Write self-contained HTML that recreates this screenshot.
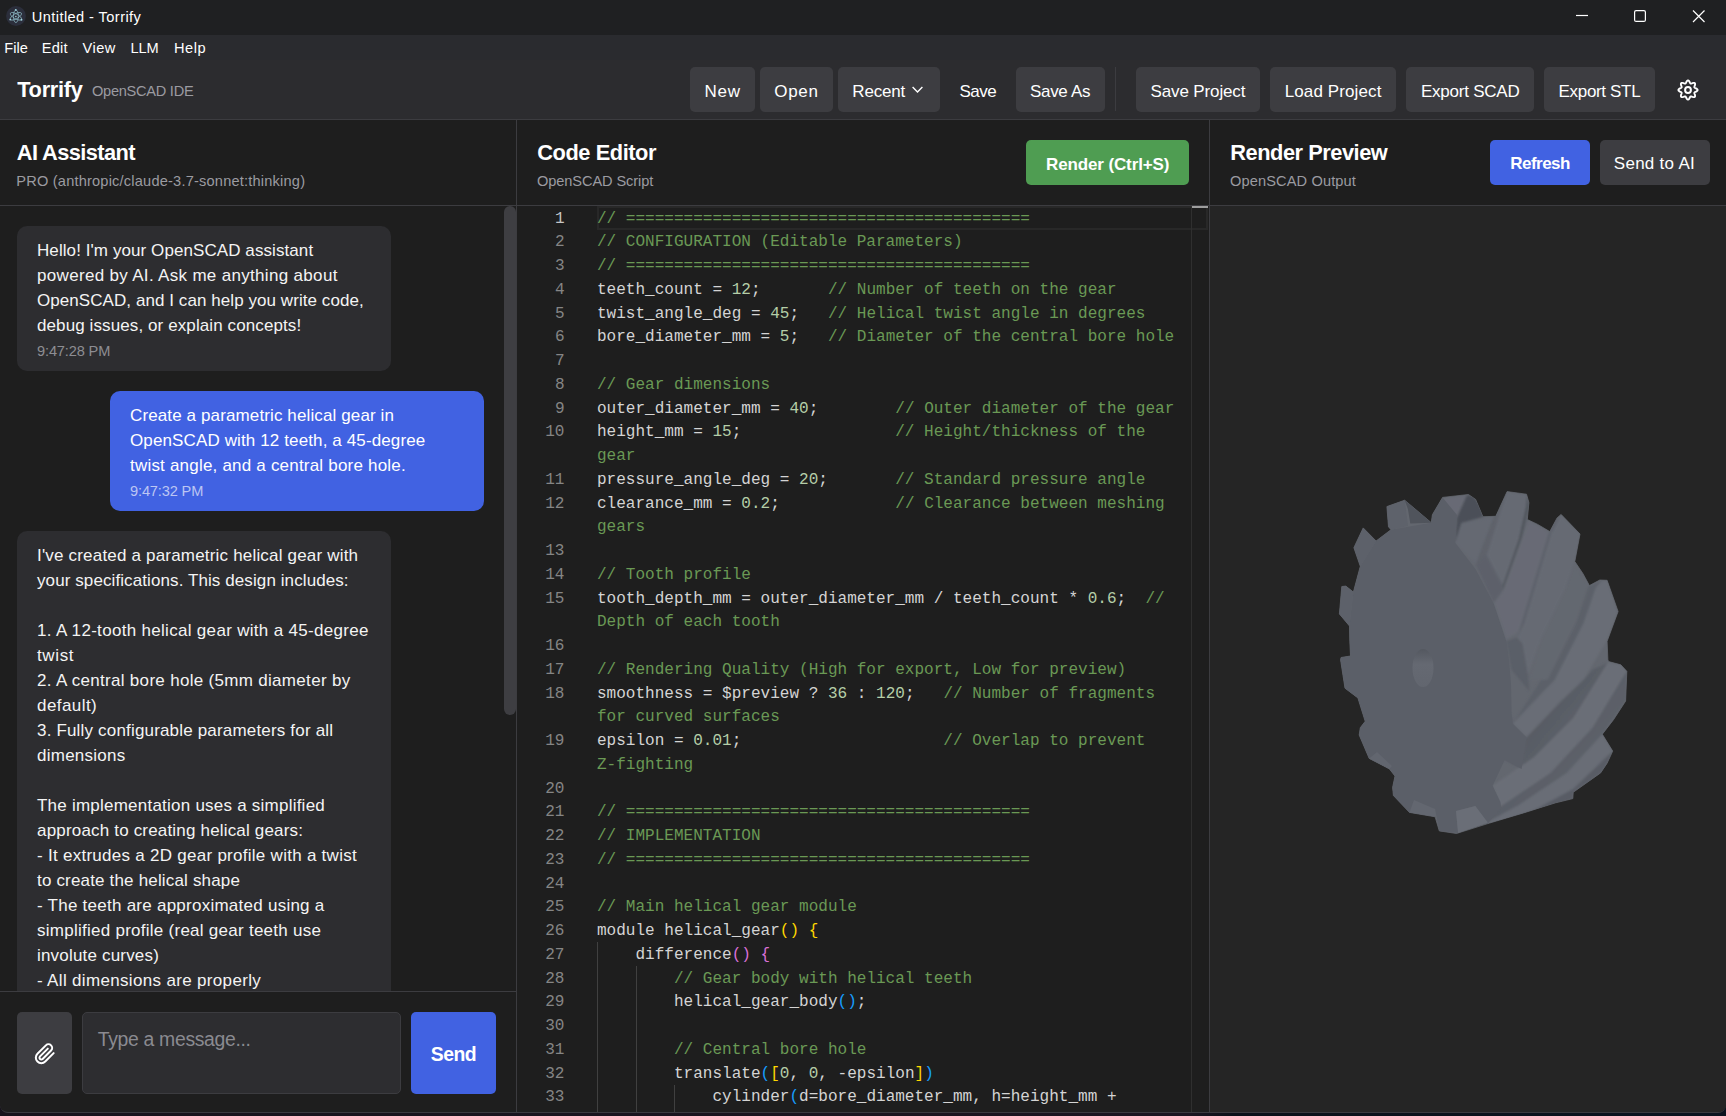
<!DOCTYPE html>
<html lang="en"><head><meta charset="utf-8"><title>Untitled - Torrify</title>
<style>
*{box-sizing:border-box;margin:0;padding:0}
html,body{width:1726px;height:1116px;overflow:hidden;background:linear-gradient(90deg,#17131c 0%,#1a1520 69%,#0a1019 71.5%,#0b1420 100%);}
body{font-family:"Liberation Sans",sans-serif;color:#fff;position:relative}
.win{position:absolute;left:0;top:0;width:1726px;height:1113px;background:#1e1e1e;border-radius:0 0 8px 8px;overflow:hidden;border-bottom:1px solid #3a3a40}
.abs{position:absolute}
.t{position:absolute;white-space:nowrap;line-height:1}
.titlebar{position:absolute;left:0;top:0;width:1726px;height:34.6px;background:#1f2022}
.menubar{position:absolute;left:0;top:34px;width:1726px;height:26px;background:#2a2b2f}
.toolbar{position:absolute;left:0;top:60px;width:1726px;height:60px;background:#2c2c2f;border-bottom:1px solid #3c3c40}
.btn{position:absolute;border-radius:5px;background:#3d3d41}
.vline{position:absolute;width:1px;background:#3c3c40}
.hline{position:absolute;height:1px;background:#3c3c40}
.bubble{position:absolute;border-radius:10px;background:#2d2d30}
.bubble.user{background:#4162e2}
.code{position:absolute;left:597px;white-space:pre;font-family:"Liberation Mono",monospace;font-size:16.04px;line-height:23.75px;height:23.75px;color:#d4d4d4}
.ln{position:absolute;left:517px;width:47.5px;text-align:right;white-space:pre;font-family:"Liberation Mono",monospace;font-size:16.04px;line-height:23.75px;height:23.75px;color:#858585}
.c{color:#6a9955}.n{color:#b5cea8}
.b1{color:#ffd700}.b2{color:#da70d6}.b3{color:#179fff}
.guide{position:absolute;width:1px;background:#404040}
</style></head>
<body>
<div class="win">
<div class="menubar"></div>
<div class="titlebar"></div>
<svg class="abs" style="left:6px;top:6px" width="20" height="20" viewBox="0 0 20 20"><circle cx="10" cy="10" r="9.9" fill="#2b2e3b"/><g fill="none" stroke="#8fbcc7" stroke-width="0.7"><ellipse cx="9.9" cy="10.3" rx="6.3" ry="2.5" transform="rotate(30 9.9 10.3)"/><ellipse cx="9.9" cy="10.3" rx="6.3" ry="2.5" transform="rotate(90 9.9 10.3)"/><ellipse cx="9.9" cy="10.3" rx="6.3" ry="2.5" transform="rotate(150 9.9 10.3)"/></g><g fill="#a3d4df"><circle cx="9.9" cy="10.4" r="0.75"/><circle cx="9.8" cy="3.9" r="0.95"/><circle cx="4.3" cy="13.6" r="0.95"/><circle cx="15.5" cy="13.7" r="0.95"/></g></svg>
<div class="t" id="t1" style="left:31.80px;top:10.24px;font-size:14.6px;color:#fff;letter-spacing:0.421px;">Untitled - Torrify</div>
<svg class="abs" style="left:1560px;top:0" width="166" height="35" viewBox="0 0 166 35"><g stroke="#fff" stroke-width="1.2" fill="none"><path d="M16 15.5h12"/><rect x="74.6" y="10.6" width="10.8" height="10.8" rx="1.5"/><path d="M133 10.5l11.5 11.5M144.5 10.5L133 22"/></g></svg>
<div class="t" id="t2" style="left:4.30px;top:41.14px;font-size:14.6px;color:#fff;letter-spacing:-0.004px;">File</div>
<div class="t" id="t3" style="left:41.80px;top:41.14px;font-size:14.6px;color:#fff;letter-spacing:0.186px;">Edit</div>
<div class="t" id="t4" style="left:82.60px;top:41.14px;font-size:14.6px;color:#fff;letter-spacing:0.481px;">View</div>
<div class="t" id="t5" style="left:130.60px;top:41.14px;font-size:14.6px;color:#fff;letter-spacing:-0.130px;">LLM</div>
<div class="t" id="t6" style="left:173.90px;top:41.14px;font-size:14.6px;color:#fff;letter-spacing:0.546px;">Help</div>
<div class="toolbar"></div>
<div class="t" id="t7" style="left:17.20px;top:79.15px;font-size:21.8px;color:#fff;font-weight:bold;letter-spacing:-0.275px;">Torrify</div>
<div class="t" id="t8" style="left:92.00px;top:83.64px;font-size:14.6px;color:#9b9ba1;letter-spacing:-0.270px;">OpenSCAD IDE</div>
<div class="btn" style="left:690px;top:67px;width:65px;height:44.5px"></div>
<div class="t" id="t9" style="left:704.50px;top:82.61px;font-size:17px;color:#fff;letter-spacing:0.728px;">New</div>
<div class="btn" style="left:760px;top:67px;width:73px;height:44.5px"></div>
<div class="t" id="t10" style="left:774.30px;top:82.61px;font-size:17px;color:#fff;letter-spacing:0.652px;">Open</div>
<div class="btn" style="left:838px;top:67px;width:102px;height:44.5px"></div>
<div class="t" id="t11" style="left:852.30px;top:82.61px;font-size:17px;color:#fff;letter-spacing:-0.179px;">Recent</div>
<div class="t" id="t12" style="left:959.40px;top:82.61px;font-size:17px;color:#fff;letter-spacing:-0.438px;">Save</div>
<div class="btn" style="left:1016px;top:67px;width:89px;height:44.5px"></div>
<div class="t" id="t13" style="left:1030.00px;top:82.61px;font-size:17px;color:#fff;letter-spacing:-0.311px;">Save As</div>
<div class="btn" style="left:1136px;top:67px;width:124px;height:44.5px"></div>
<div class="t" id="t14" style="left:1150.60px;top:82.61px;font-size:17px;color:#fff;letter-spacing:-0.141px;">Save Project</div>
<div class="btn" style="left:1270px;top:67px;width:126px;height:44.5px"></div>
<div class="t" id="t15" style="left:1284.70px;top:82.61px;font-size:17px;color:#fff;letter-spacing:0.112px;">Load Project</div>
<div class="btn" style="left:1406px;top:67px;width:128px;height:44.5px"></div>
<div class="t" id="t16" style="left:1421.00px;top:82.61px;font-size:17px;color:#fff;letter-spacing:-0.236px;">Export SCAD</div>
<div class="btn" style="left:1544px;top:67px;width:111px;height:44.5px"></div>
<div class="t" id="t17" style="left:1558.60px;top:82.61px;font-size:17px;color:#fff;letter-spacing:-0.335px;">Export STL</div>
<svg class="abs" style="left:911px;top:85px" width="13" height="10" viewBox="0 0 13 10"><path d="M1.6 2L6.5 7l4.9-5" fill="none" stroke="#fff" stroke-width="1.4"/></svg>
<div class="vline" style="left:1115px;top:67px;height:44px"></div>
<svg class="abs" style="left:1675.9px;top:77.8px" width="24" height="24" viewBox="-12 -12 24 24" fill="none" stroke="#fff" stroke-width="1.9" stroke-linejoin="round"><polygon points="0.00,-9.60 0.62,-9.40 1.16,-8.85 1.61,-8.09 1.96,-7.32 2.28,-6.71 2.64,-6.37 3.13,-6.35 3.79,-6.56 4.58,-6.86 5.43,-7.08 6.21,-7.08 6.79,-6.79 7.08,-6.21 7.08,-5.43 6.86,-4.58 6.56,-3.79 6.35,-3.13 6.37,-2.64 6.71,-2.28 7.32,-1.96 8.09,-1.61 8.85,-1.16 9.40,-0.62 9.60,-0.00 9.40,0.62 8.85,1.16 8.09,1.61 7.32,1.96 6.71,2.28 6.37,2.64 6.35,3.13 6.56,3.79 6.86,4.58 7.08,5.43 7.08,6.21 6.79,6.79 6.21,7.08 5.43,7.08 4.58,6.86 3.79,6.56 3.13,6.35 2.64,6.37 2.28,6.71 1.96,7.32 1.61,8.09 1.16,8.85 0.62,9.40 0.00,9.60 -0.62,9.40 -1.16,8.85 -1.61,8.09 -1.96,7.32 -2.28,6.71 -2.64,6.37 -3.13,6.35 -3.79,6.56 -4.58,6.86 -5.43,7.08 -6.21,7.08 -6.79,6.79 -7.08,6.21 -7.08,5.43 -6.86,4.58 -6.56,3.79 -6.35,3.13 -6.37,2.64 -6.71,2.28 -7.32,1.96 -8.09,1.61 -8.85,1.16 -9.40,0.62 -9.60,0.00 -9.40,-0.62 -8.85,-1.16 -8.09,-1.61 -7.32,-1.96 -6.71,-2.28 -6.37,-2.64 -6.35,-3.13 -6.56,-3.79 -6.86,-4.58 -7.08,-5.43 -7.08,-6.21 -6.79,-6.79 -6.21,-7.08 -5.43,-7.08 -4.58,-6.86 -3.79,-6.56 -3.13,-6.35 -2.64,-6.37 -2.28,-6.71 -1.96,-7.32 -1.61,-8.09 -1.16,-8.85 -0.62,-9.40"/><circle cx="0" cy="0" r="2.9" stroke-width="2"/></svg>
<div class="abs" style="left:1210px;top:206px;width:516px;height:907px;background:#252525"></div>
<div class="hline" style="left:0;top:205px;width:1726px"></div>
<div class="vline" style="left:516px;top:120px;height:993px"></div>
<div class="vline" style="left:1209px;top:120px;height:993px"></div>
<div class="t" id="t18" style="left:16.80px;top:142.35px;font-size:21.8px;color:#fff;font-weight:bold;letter-spacing:-0.581px;">AI Assistant</div>
<div class="t" id="t19" style="left:16.30px;top:173.54px;font-size:14.6px;color:#9b9ba1;letter-spacing:0.196px;">PRO (anthropic/claude-3.7-sonnet:thinking)</div>
<div class="t" id="t20" style="left:537.20px;top:142.35px;font-size:21.8px;color:#fff;font-weight:bold;letter-spacing:-0.420px;">Code Editor</div>
<div class="t" id="t21" style="left:536.90px;top:173.54px;font-size:14.6px;color:#9b9ba1;letter-spacing:-0.081px;">OpenSCAD Script</div>
<div class="t" id="t22" style="left:1230.30px;top:142.35px;font-size:21.8px;color:#fff;font-weight:bold;letter-spacing:-0.469px;">Render Preview</div>
<div class="t" id="t23" style="left:1230.00px;top:173.54px;font-size:14.6px;color:#9b9ba1;letter-spacing:0.125px;">OpenSCAD Output</div>
<div class="btn" style="left:1026px;top:140px;width:163px;height:45px;background:#4f9d52"></div>
<div class="t" id="t24" style="left:1046.00px;top:155.61px;font-size:17px;color:#fff;font-weight:bold;letter-spacing:-0.125px;">Render (Ctrl+S)</div>
<div class="btn" style="left:1490px;top:140px;width:100px;height:45px;background:#4162e2"></div>
<div class="t" id="t25" style="left:1510.30px;top:155.21px;font-size:17px;color:#fff;font-weight:bold;letter-spacing:-0.530px;">Refresh</div>
<div class="btn" style="left:1600px;top:140px;width:110px;height:45px"></div>
<div class="t" id="t26" style="left:1613.80px;top:155.21px;font-size:17px;color:#fff;letter-spacing:0.275px;">Send to AI</div>
<div class="abs" id="chat" style="left:0;top:206px;width:516px;height:785px;overflow:hidden">
<div class="bubble " style="left:17px;top:20px;width:374px;height:144.7px"></div>
<div class="t" id="t27" style="left:37.00px;top:35.61px;font-size:17px;color:#f4f4f4;letter-spacing:0.080px;">Hello! I&#x27;m your OpenSCAD assistant</div>
<div class="t" id="t28" style="left:37.00px;top:60.61px;font-size:17px;color:#f4f4f4;letter-spacing:0.320px;">powered by AI. Ask me anything about</div>
<div class="t" id="t29" style="left:37.00px;top:85.61px;font-size:17px;color:#f4f4f4;letter-spacing:0.066px;">OpenSCAD, and I can help you write code,</div>
<div class="t" id="t30" style="left:37.00px;top:110.61px;font-size:17px;color:#f4f4f4;letter-spacing:0.102px;">debug issues, or explain concepts!</div>
<div class="t" id="t31" style="left:37.00px;top:138.24px;font-size:14.6px;color:#8d8d93;letter-spacing:-0.144px;">9:47:28 PM</div>
<div class="bubble user" style="left:110px;top:185px;width:374px;height:119.7px"></div>
<div class="t" id="t32" style="left:130.00px;top:200.61px;font-size:17px;color:#fff;letter-spacing:0.121px;">Create a parametric helical gear in</div>
<div class="t" id="t33" style="left:130.00px;top:225.61px;font-size:17px;color:#fff;letter-spacing:0.123px;">OpenSCAD with 12 teeth, a 45-degree</div>
<div class="t" id="t34" style="left:130.00px;top:250.61px;font-size:17px;color:#fff;letter-spacing:0.203px;">twist angle, and a central bore hole.</div>
<div class="t" id="t35" style="left:130.00px;top:278.24px;font-size:14.6px;color:#bcc6f3;letter-spacing:-0.144px;">9:47:32 PM</div>
<div class="bubble " style="left:17px;top:325px;width:374px;height:600px"></div>
<div class="t" id="t36" style="left:37.00px;top:340.61px;font-size:17px;color:#f4f4f4;letter-spacing:0.187px;">I&#x27;ve created a parametric helical gear with</div>
<div class="t" id="t37" style="left:37.00px;top:365.61px;font-size:17px;color:#f4f4f4;letter-spacing:0.094px;">your specifications. This design includes:</div>
<div class="t" id="t38" style="left:37.00px;top:415.61px;font-size:17px;color:#f4f4f4;letter-spacing:0.307px;">1. A 12-tooth helical gear with a 45-degree</div>
<div class="t" id="t39" style="left:37.00px;top:440.61px;font-size:17px;color:#f4f4f4;letter-spacing:0.620px;">twist</div>
<div class="t" id="t40" style="left:37.00px;top:465.61px;font-size:17px;color:#f4f4f4;letter-spacing:0.309px;">2. A central bore hole (5mm diameter by</div>
<div class="t" id="t41" style="left:37.00px;top:490.61px;font-size:17px;color:#f4f4f4;letter-spacing:0.437px;">default)</div>
<div class="t" id="t42" style="left:37.00px;top:515.61px;font-size:17px;color:#f4f4f4;letter-spacing:0.176px;">3. Fully configurable parameters for all</div>
<div class="t" id="t43" style="left:37.00px;top:540.61px;font-size:17px;color:#f4f4f4;letter-spacing:0.250px;">dimensions</div>
<div class="t" id="t44" style="left:37.00px;top:590.61px;font-size:17px;color:#f4f4f4;letter-spacing:0.231px;">The implementation uses a simplified</div>
<div class="t" id="t45" style="left:37.00px;top:615.61px;font-size:17px;color:#f4f4f4;letter-spacing:0.180px;">approach to creating helical gears:</div>
<div class="t" id="t46" style="left:37.00px;top:640.61px;font-size:17px;color:#f4f4f4;letter-spacing:0.272px;">- It extrudes a 2D gear profile with a twist</div>
<div class="t" id="t47" style="left:37.00px;top:665.61px;font-size:17px;color:#f4f4f4;letter-spacing:0.172px;">to create the helical shape</div>
<div class="t" id="t48" style="left:37.00px;top:690.61px;font-size:17px;color:#f4f4f4;letter-spacing:0.251px;">- The teeth are approximated using a</div>
<div class="t" id="t49" style="left:37.00px;top:715.61px;font-size:17px;color:#f4f4f4;letter-spacing:0.261px;">simplified profile (real gear teeth use</div>
<div class="t" id="t50" style="left:37.00px;top:740.61px;font-size:17px;color:#f4f4f4;letter-spacing:0.184px;">involute curves)</div>
<div class="t" id="t51" style="left:37.00px;top:765.61px;font-size:17px;color:#f4f4f4;letter-spacing:0.332px;">- All dimensions are properly</div>
<div class="t" id="t52" style="left:37.00px;top:790.61px;font-size:17px;color:#f4f4f4;">parameterized</div>
<div class="abs" style="left:504px;top:0;width:12px;height:509px;border-radius:6px;background:#3e3e42"></div>
</div>
<div class="hline" style="left:0;top:991px;width:516px"></div>
<div class="btn" style="left:17px;top:1012px;width:55px;height:81.5px"></div><svg class="abs" style="left:34px;top:1042.8px" width="22" height="22" viewBox="0 0 24 24" fill="none" stroke="#fff" stroke-width="2.2" stroke-linecap="round" stroke-linejoin="round"><path d="M21.44 11.05l-9.19 9.19a6 6 0 0 1-8.49-8.49l9.19-9.19a4 4 0 0 1 5.66 5.66l-9.2 9.19a2 2 0 0 1-2.83-2.83l8.49-8.48"/></svg>
<div class="abs" style="left:82px;top:1012px;width:319px;height:81.5px;border-radius:5px;background:#2d2d30;border:1px solid #3c3c40"></div>
<div class="t" id="t53" style="left:97.80px;top:1030.08px;font-size:19.4px;color:#8a8a90;letter-spacing:-0.327px;">Type a message...</div>
<div class="btn" style="left:411px;top:1012px;width:85px;height:81.5px;background:#4162e2"></div>
<div class="t" id="t54" style="left:430.80px;top:1044.58px;font-size:19.4px;color:#fff;font-weight:bold;letter-spacing:-0.530px;">Send</div>
<div class="abs" style="left:597px;top:206px;width:611px;height:24px;border:2px solid #282828"></div>
<div class="vline" style="left:1191px;top:206px;height:907px;background:#2f2f2f"></div>
<div class="abs" style="left:1192px;top:206px;width:16px;height:2px;background:#9e9e9e"></div>
<div class="ln" style="top:207.65px;color:#c6c6c6">1</div><div class="code" style="top:207.65px"><span class="c">// ==========================================</span></div>
<div class="ln" style="top:231.40px">2</div><div class="code" style="top:231.40px"><span class="c">// CONFIGURATION (Editable Parameters)</span></div>
<div class="ln" style="top:255.15px">3</div><div class="code" style="top:255.15px"><span class="c">// ==========================================</span></div>
<div class="ln" style="top:278.90px">4</div><div class="code" style="top:278.90px">teeth_count = <span class="n">12</span>;       <span class="c">// Number of teeth on the gear</span></div>
<div class="ln" style="top:302.65px">5</div><div class="code" style="top:302.65px">twist_angle_deg = <span class="n">45</span>;   <span class="c">// Helical twist angle in degrees</span></div>
<div class="ln" style="top:326.40px">6</div><div class="code" style="top:326.40px">bore_diameter_mm = <span class="n">5</span>;   <span class="c">// Diameter of the central bore hole</span></div>
<div class="ln" style="top:350.15px">7</div>
<div class="ln" style="top:373.90px">8</div><div class="code" style="top:373.90px"><span class="c">// Gear dimensions</span></div>
<div class="ln" style="top:397.65px">9</div><div class="code" style="top:397.65px">outer_diameter_mm = <span class="n">40</span>;        <span class="c">// Outer diameter of the gear</span></div>
<div class="ln" style="top:421.40px">10</div><div class="code" style="top:421.40px">height_mm = <span class="n">15</span>;                <span class="c">// Height/thickness of the</span></div>
<div class="code" style="top:445.15px"><span class="c">gear</span></div>
<div class="ln" style="top:468.90px">11</div><div class="code" style="top:468.90px">pressure_angle_deg = <span class="n">20</span>;       <span class="c">// Standard pressure angle</span></div>
<div class="ln" style="top:492.65px">12</div><div class="code" style="top:492.65px">clearance_mm = <span class="n">0.2</span>;            <span class="c">// Clearance between meshing</span></div>
<div class="code" style="top:516.40px"><span class="c">gears</span></div>
<div class="ln" style="top:540.15px">13</div>
<div class="ln" style="top:563.90px">14</div><div class="code" style="top:563.90px"><span class="c">// Tooth profile</span></div>
<div class="ln" style="top:587.65px">15</div><div class="code" style="top:587.65px">tooth_depth_mm = outer_diameter_mm / teeth_count * <span class="n">0.6</span>;  <span class="c">//</span></div>
<div class="code" style="top:611.40px"><span class="c">Depth of each tooth</span></div>
<div class="ln" style="top:635.15px">16</div>
<div class="ln" style="top:658.90px">17</div><div class="code" style="top:658.90px"><span class="c">// Rendering Quality (High for export, Low for preview)</span></div>
<div class="ln" style="top:682.65px">18</div><div class="code" style="top:682.65px">smoothness = $preview ? <span class="n">36</span> : <span class="n">120</span>;   <span class="c">// Number of fragments</span></div>
<div class="code" style="top:706.40px"><span class="c">for curved surfaces</span></div>
<div class="ln" style="top:730.15px">19</div><div class="code" style="top:730.15px">epsilon = <span class="n">0.01</span>;                     <span class="c">// Overlap to prevent</span></div>
<div class="code" style="top:753.90px"><span class="c">Z-fighting</span></div>
<div class="ln" style="top:777.65px">20</div>
<div class="ln" style="top:801.40px">21</div><div class="code" style="top:801.40px"><span class="c">// ==========================================</span></div>
<div class="ln" style="top:825.15px">22</div><div class="code" style="top:825.15px"><span class="c">// IMPLEMENTATION</span></div>
<div class="ln" style="top:848.90px">23</div><div class="code" style="top:848.90px"><span class="c">// ==========================================</span></div>
<div class="ln" style="top:872.65px">24</div>
<div class="ln" style="top:896.40px">25</div><div class="code" style="top:896.40px"><span class="c">// Main helical gear module</span></div>
<div class="ln" style="top:920.15px">26</div><div class="code" style="top:920.15px">module helical_gear<span class="b1">()</span> <span class="b1">{</span></div>
<div class="ln" style="top:943.90px">27</div><div class="code" style="top:943.90px">    difference<span class="b2">()</span> <span class="b2">{</span></div>
<div class="ln" style="top:967.65px">28</div><div class="code" style="top:967.65px">        <span class="c">// Gear body with helical teeth</span></div>
<div class="ln" style="top:991.40px">29</div><div class="code" style="top:991.40px">        helical_gear_body<span class="b3">()</span>;</div>
<div class="ln" style="top:1015.15px">30</div>
<div class="ln" style="top:1038.90px">31</div><div class="code" style="top:1038.90px">        <span class="c">// Central bore hole</span></div>
<div class="ln" style="top:1062.65px">32</div><div class="code" style="top:1062.65px">        translate<span class="b3">(</span><span class="b1">[</span><span class="n">0</span>, <span class="n">0</span>, -epsilon<span class="b1">]</span><span class="b3">)</span></div>
<div class="ln" style="top:1086.40px">33</div><div class="code" style="top:1086.40px">            cylinder<span class="b3">(</span>d=bore_diameter_mm, h=height_mm +</div>
<div class="guide" style="left:597px;top:942.25px;height:300px"></div>
<div class="guide" style="left:635.5px;top:966.00px;height:300px"></div>
<div class="guide" style="left:674px;top:1084.75px;height:300px"></div>
<svg class="abs" style="left:1210px;top:206px" width="516" height="907" viewBox="1210 206 516 907">
<defs><linearGradient id="hg" x1="0" y1="0" x2="0" y2="1"><stop offset="0" stop-color="#545860"/><stop offset="0.4" stop-color="#656972"/><stop offset="1" stop-color="#62666f"/></linearGradient><linearGradient id="sd" x1="0" y1="0" x2="1" y2="1"><stop offset="0" stop-color="#50545c"/><stop offset="1" stop-color="#646871"/></linearGradient><filter id="bl" x="-5%" y="-5%" width="110%" height="110%"><feGaussianBlur stdDeviation="0.9"/></filter><clipPath id="sc"><polygon points="1340.6,660.0 1341.0,657.5 1350.5,656.0 1349.8,641.3 1349.5,626.0 1339.4,613.9 1341.8,586.5 1345.8,586.1 1353.4,592.1 1360.3,566.3 1353.9,547.7 1363.2,527.9 1376.1,541.0 1391.0,529.7 1388.5,526.8 1386.9,506.6 1404.7,500.2 1431.3,522.7 1432.4,514.7 1442.6,497.4 1468.4,494.5 1475.6,499.4 1482.9,516.7 1495.8,516.3 1507.1,491.6 1526.5,494.2 1528.9,502.6 1527.3,519.5 1537.7,524.4 1549.8,531.6 1557.1,517.9 1561.1,514.4 1580.0,534.0 1574.8,561.5 1582.9,573.5 1589.4,585.6 1599.8,580.0 1607.1,580.3 1618.1,611.5 1607.1,641.3 1607.9,660.0 1608.7,661.6 1620.8,664.8 1626.8,671.3 1625.6,701.1 1613.5,719.7 1602.3,734.2 1612.7,751.1 1607.1,763.2 1600.6,772.9 1573.2,792.3 1572.8,798.6 1555.6,802.8 1524.3,812.7 1487.8,823.6 1456.5,833.5 1439.3,830.9 1435.1,816.8 1409.5,812.4 1393.4,795.5 1392.6,787.4 1395.0,776.1 1389.4,768.9 1369.2,758.4 1359.2,735.0 1360.3,727.7 1365.2,721.3 1357.9,697.9 1345.0,688.2" fill="#000"/></clipPath></defs>
<polygon points="1340.6,660.0 1341.0,657.5 1350.5,656.0 1349.8,641.3 1349.5,626.0 1339.4,613.9 1341.8,586.5 1345.8,586.1 1353.4,592.1 1360.3,566.3 1353.9,547.7 1363.2,527.9 1376.1,541.0 1391.0,529.7 1388.5,526.8 1386.9,506.6 1404.7,500.2 1431.3,522.7 1432.4,514.7 1442.6,497.4 1468.4,494.5 1475.6,499.4 1482.9,516.7 1495.8,516.3 1507.1,491.6 1526.5,494.2 1528.9,502.6 1527.3,519.5 1537.7,524.4 1549.8,531.6 1557.1,517.9 1561.1,514.4 1580.0,534.0 1574.8,561.5 1582.9,573.5 1589.4,585.6 1599.8,580.0 1607.1,580.3 1618.1,611.5 1607.1,641.3 1607.9,660.0 1608.7,661.6 1620.8,664.8 1626.8,671.3 1625.6,701.1 1613.5,719.7 1602.3,734.2 1612.7,751.1 1607.1,763.2 1600.6,772.9 1573.2,792.3 1572.8,798.6 1555.6,802.8 1524.3,812.7 1487.8,823.6 1456.5,833.5 1439.3,830.9 1435.1,816.8 1409.5,812.4 1393.4,795.5 1392.6,787.4 1395.0,776.1 1389.4,768.9 1369.2,758.4 1359.2,735.0 1360.3,727.7 1365.2,721.3 1357.9,697.9 1345.0,688.2" fill="#63676f" stroke="#63676f" stroke-width="0.8" stroke-linejoin="round"/>
<g clip-path="url(#sc)"><g filter="url(#bl)">
<polygon points="1440.0,497.9 1466.9,495.2 1457.0,517.6 1440.0,506.9" fill="#676b74"/>
<polygon points="1466.9,495.2 1473.2,496.1 1481.2,506.9 1483.0,516.7 1461.5,523.0 1455.2,542.7 1457.0,517.6" fill="#4c5058"/>
<polygon points="1461.5,523.0 1493.8,516.7 1475.8,564.2 1455.2,542.7" fill="#656972"/>
<polygon points="1507.2,492.2 1497.3,512.3 1493.8,516.7 1475.8,564.2 1486.6,555.3 1499.1,515.8" fill="#5e626b"/>
<polygon points="1507.2,492.2 1526.9,495.2 1526.0,506.9 1518.9,539.1 1502.7,585.7 1486.6,555.3 1499.1,515.8" fill="#666a73"/>
<polygon points="1526.9,495.2 1528.7,506.9 1521.5,539.1 1502.7,591.1 1502.7,585.7 1518.9,539.1 1526.0,506.9" fill="#50545c"/>
<polygon points="1475.8,564.2 1486.6,555.3 1502.7,585.7 1502.7,591.1 1493.8,602.8" fill="#5d616a"/>
<polygon points="1528.7,520.3 1549.3,532.0 1518.9,632.3 1506.3,639.5 1493.8,602.8 1502.7,591.1 1521.5,539.1" fill="#676b74"/>
<polygon points="1561.0,514.9 1554.7,521.2 1549.3,532.0 1518.9,632.3 1517.1,637.7 1524.2,623.4 1551.1,533.8" fill="#5d616a"/>
<polygon points="1561.0,514.9 1579.8,533.8 1574.4,562.4 1565.4,589.3 1540.4,641.3 1527.8,675.3 1522.4,644.0 1517.1,637.7 1524.2,623.4 1551.1,533.8" fill="#666a73"/>
<polygon points="1506.3,641.3 1517.1,637.7 1522.4,644.0 1527.8,675.3 1529.6,691.5 1511.7,670.0" fill="#5a5e67"/>
<polygon points="1574.4,562.4 1588.7,585.7 1576.2,623.4 1547.5,680.0 1529.6,680.0 1540.4,641.3 1565.4,589.3" fill="#636770"/>
<polygon points="1602.2,580.4 1590.5,585.7 1588.7,585.7 1576.2,623.4 1547.5,680.0 1554.7,680.0 1583.4,623.4 1595.9,587.5" fill="#5c6069"/>
<polygon points="1602.2,580.4 1607.6,581.3 1617.4,612.6 1606.7,641.3 1583.4,680.0 1554.7,680.0 1583.4,623.4 1595.9,587.5" fill="#696d76"/>
<polygon points="1554.7,680.0 1541.0,680.0 1534.5,690.6 1512.7,723.7 1513.5,722.9 1547.4,687.4" fill="#5c6069"/>
<polygon points="1554.7,680.0 1583.4,680.0 1560.3,701.9 1526.5,737.4 1512.7,723.7 1547.4,687.4" fill="#696d76"/>
<polygon points="1526.5,737.4 1560.3,701.9 1583.4,680.0 1592.6,669.7 1607.9,662.4 1573.2,718.1 1534.5,756.8 1521.6,768.9" fill="url(#sd)"/>
<polygon points="1512.7,723.7 1526.5,737.4 1521.6,768.9 1504.7,760.0 1511.6,713.2" fill="#5b5f68"/>
<polygon points="1492.6,785.8 1534.5,756.8 1573.2,718.1 1607.9,662.4 1620.8,664.8 1626.8,671.3 1592.6,727.7 1550.6,772.9 1500.6,806.8" fill="#6a6e77"/>
<polygon points="1500.6,806.8 1550.6,772.9 1592.6,727.7 1626.8,671.3 1625.6,701.1 1602.3,734.2 1566.8,772.9 1518.4,805.2 1487.7,822.1" fill="url(#sd)"/>
<polygon points="1602.3,734.2 1612.7,751.1 1573.2,789.0 1534.5,810.0 1487.7,826.1 1487.7,822.1 1518.4,805.2 1566.8,772.9" fill="#696d76"/>
<polygon points="1612.7,751.1 1607.1,763.2 1600.6,772.9 1573.2,792.3 1572.4,798.7 1534.5,812.4 1487.7,826.1 1534.5,810.0 1573.2,789.0" fill="#585c65"/>
</g></g>
<polygon points="1350.5,656.0 1349.8,641.3 1349.5,626.0 1353.4,592.1 1360.3,566.3 1376.1,541.0 1391.0,529.7 1431.3,522.7 1432.4,514.7 1442.6,497.4 1457.0,515.0 1455.2,542.7 1475.8,569.6 1493.8,603.7 1506.3,641.3 1509.0,660.0 1511.0,684.0 1511.6,713.2 1512.7,723.7 1526.5,737.4 1521.6,768.9 1504.7,760.0 1492.6,785.8 1500.3,801.7 1501.3,808.0 1487.8,823.6 1475.3,805.9 1456.0,811.1 1458.1,833.0 1439.3,830.9 1435.1,809.0 1409.5,812.4 1393.4,795.5 1392.6,787.4 1395.0,776.1 1389.4,768.9 1369.2,758.4 1359.2,735.0 1360.3,727.7 1365.2,721.3 1357.9,697.9 1345.0,688.2 1340.6,660.0 1341.0,657.5" fill="#5b5f68"/>
<polygon points="1349.5,626.0 1339.4,613.9 1341.8,586.5 1345.8,586.1 1353.4,592.1" fill="#5d616a"/>
<polygon points="1360.3,566.3 1353.9,547.7 1363.2,527.9 1376.1,541.0" fill="#5d616a"/>
<polygon points="1391.0,529.7 1388.5,526.8 1386.9,506.6 1404.7,500.2 1408.0,526.0" fill="#5e626b"/>
<polygon points="1404.7,500.2 1431.3,522.7 1410.3,523.5 1407.9,509.0" fill="#50545c"/>
<polygon points="1456.0,811.1 1475.3,805.9 1487.8,822.6 1458.1,833.0" fill="#6a6e77"/>
<polygon points="1409.5,812.4 1414.0,800.0 1435.1,809.0 1435.1,816.8" fill="#636770"/>
<polygon points="1369.2,758.4 1377.0,752.0 1392.0,766.0 1389.4,768.9" fill="#62666f"/>
<ellipse cx="1423" cy="668" rx="10.5" ry="19" fill="url(#hg)"/>
</svg>
</div>
</body></html>
